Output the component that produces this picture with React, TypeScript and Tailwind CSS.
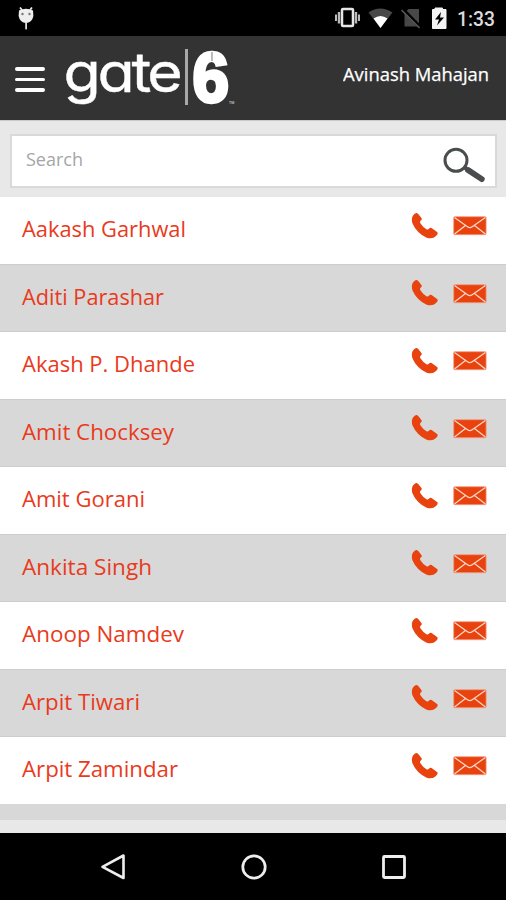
import { useState } from "react";
import clsx from "clsx";

const contacts = [
	{ name: "Aakash Garhwal", width: 164 },
	{ name: "Aditi Parashar", width: 142 },
	{ name: "Akash P. Dhande", width: 173 },
	{ name: "Amit Chocksey", width: 152 },
	{ name: "Amit Gorani", width: 123 },
	{ name: "Ankita Singh", width: 130 },
	{ name: "Anoop Namdev", width: 162 },
	{ name: "Arpit Tiwari", width: 118 },
	{ name: "Arpit Zamindar", width: 156 },
];

const PhoneIcon = () => (
	<svg width="28" height="28" viewBox="0 0 28 28" fill="#e8420f">
		<path d="M2.2 3.2 Q4.2 .8 5.8 1 Q7.2 1.6 10.6 6.2 Q11.4 7.4 9.8 8.6 Q8.6 9.6 9.2 11 Q11.8 15.2 15.8 17.4 Q17 18 17.9 16.8 Q19 15.2 20.6 15.9 L26.4 20.2 Q27.4 21.6 25 24 Q21.4 27.6 15.2 25.4 Q5.6 20.8 1.4 11.2 Q0 6 2.2 3.2Z" />
	</svg>
);

const MailIcon = () => (
	<svg width="34" height="20" viewBox="0 0 34 20">
		<rect x=".7" y=".7" width="32.4" height="18" rx="1" fill="#e8420f" stroke="#f39a7d" strokeWidth=".8" />
		<path
			d="M1.5 1.5 L14.5 10.8 Q16.8 12.6 19.2 10.8 L32.4 1.5 M1.5 18 L12.5 9.5 M32.4 18 L21.5 9.5"
			fill="none"
			stroke="#ffd5c5"
			strokeWidth="1.3"
		/>
	</svg>
);

// Android status bar
const StatusBar = () => (
	<div className="flex h-9 shrink-0 items-start bg-black">
		<svg className="ml-[17px] mt-[6px]" width="18" height="26" viewBox="0 0 18 26">
			<path d="M3 1.5 L5 4 M15 1.5 L13 4" stroke="#eee" strokeWidth="1.8" />
			<path d="M2 4.5 Q9 1 16 4.5 L16.4 10 Q15 16.8 9 17 Q3 16.8 1.6 10Z" fill="#eee" />
			<path d="M8.2 16 H10 V22.5 L9 24 L8.2 22.5Z" fill="#ddd" />
			<circle cx="5.5" cy="8" r="1.2" fill="#777" />
			<circle cx="12.5" cy="8" r="1.2" fill="#777" />
		</svg>
		<svg className="ml-auto mt-[6px]" width="118" height="24" viewBox="0 0 118 24">
			{/* vibrate */}
			<rect x="8" y="3" width="11" height="17" rx="1" fill="none" stroke="#e6e6e6" strokeWidth="2.5" />
			<path d="M5 6 V17.5 M22 6 V17.5" stroke="#bbb" strokeWidth="2.4" />
			<path d="M2 8.5 V15 M25 8.5 V15" stroke="#bbb" strokeWidth="2" />
			{/* wifi */}
			<path d="M34.5 6.5 Q46 -1.5 58.5 6.5 L46.5 22Z" fill="#484848" />
			<path d="M39.5 12.5 Q46.5 7.5 53.5 12.5 L46.5 22Z" fill="#fff" />
			{/* no sim */}
			<path d="M74.5 3 H85 V20.5 H70.5 V7Z" fill="#484848" />
			<path d="M68 2.5 L86.5 21.5" stroke="#000" strokeWidth="3.4" />
			<path d="M67.5 4 L85.5 22" stroke="#5a5a5a" strokeWidth="1.6" />
			{/* battery */}
			<path d="M101 2 V3.5 H98.5 V22.5 H112 V3.5 H108.5 V2Z" fill="#f3f3f3" stroke="#f3f3f3" />
			<path d="M107 6 L101 13.5 H105 L103 19.5 L110 11.5 H106Z" fill="#000" />
		</svg>
		<svg className="ml-[2px] mr-[8px] mt-[6px]" width="44" height="26" viewBox="0 0 44 26">
			<text x="3" y="20" textLength="38" lengthAdjust="spacingAndGlyphs" fill="#dcdcdc" className="font-[Roboto,sans-serif] text-[21px] font-medium">
				1:33
			</text>
		</svg>
	</div>
);

const Logo = () => (
	<svg className="ml-[18px]" width="170" height="64" viewBox="0 0 170 64" fill="#fff" overflow="visible">
		<text
			x="0.5"
			y="45.5"
			textLength="116"
			lengthAdjust="spacingAndGlyphs"
			stroke="#fff"
			strokeWidth=".4"
			className="font-[Inter,sans-serif] text-[55px] tracking-[-3px] [font-feature-settings:'cv11'_1]"
		>
			gate
		</text>
		<rect x="122" y="3" width="3" height="56" fill="#a8a8a8" />
		<text
			x="129.5"
			y="56"
			textLength="36.5"
			lengthAdjust="spacingAndGlyphs"
			stroke="#fff"
			strokeWidth="3.5"
			className="font-['Liberation_Sans',sans-serif] text-[70px] font-bold"
		>
			6
		</text>
		<rect x="148.3" y="6" width="1.3" height="9" fill="#999" />
		<text x="166" y="57.5" fill="#bbb" className="font-[Roboto,sans-serif] text-[3.5px] font-bold">
			TM
		</text>
	</svg>
);

const NavBar = () => (
	<nav className="flex h-[67px] shrink-0 items-center bg-black pl-[99px] pr-[98px]">
		<button aria-label="Back">
			<svg width="28" height="30" viewBox="0 0 28 30">
				<path d="M24.5 3.5 V26 L3.5 14.8Z" fill="none" stroke="#eee" strokeWidth="2.6" strokeLinejoin="round" />
			</svg>
		</button>
		<button aria-label="Home" className="mx-auto">
			<svg width="28" height="28" viewBox="0 0 28 28">
				<circle cx="14" cy="14" r="11.2" fill="none" stroke="#eee" strokeWidth="2.7" />
			</svg>
		</button>
		<button aria-label="Recents">
			<svg width="28" height="28" viewBox="0 0 28 28">
				<rect x="3.5" y="3.5" width="21" height="21" rx="1" fill="none" stroke="#eee" strokeWidth="2.8" />
			</svg>
		</button>
	</nav>
);

export default function App() {
	const [query, setQuery] = useState("");

	const visible = contacts.filter((c) =>
		c.name.toLowerCase().includes(query.toLowerCase()),
	);

	return (
		<div className="flex h-[900px] w-[506px] flex-col overflow-hidden bg-[#e8e8e8] font-['Open_Sans',sans-serif]">
			<StatusBar />

			<header className="flex h-[84px] shrink-0 items-start bg-[#333] pl-[15px] pr-[17px] pt-[10px]">
				<button aria-label="Menu" className="mt-[21px] flex flex-col gap-[7px]">
					<span className="h-[3.5px] w-[30px] rounded-full bg-white" />
					<span className="h-[3.5px] w-[30px] rounded-full bg-white" />
					<span className="h-[3.5px] w-[30px] rounded-full bg-white" />
				</button>
				<Logo />
				<svg className="ml-auto mt-[14px]" width="146" height="30" viewBox="0 0 146 30">
					<text x="0" y="21" textLength="146" lengthAdjust="spacingAndGlyphs" fill="#fff" stroke="#fff" strokeWidth=".25" className="text-[18.5px]">
						Avinash Mahajan
					</text>
				</svg>
			</header>

			{/* Search */}
			<div className="h-[76.5px] shrink-0 border-t border-[#c9c9c9] pl-[10px] pr-[9px] pt-[13px]">
				<div className="flex h-[54px] items-center border-2 border-[#d9d9d9] bg-white pl-[14px] pr-[9px]">
					<input
						value={query}
						onChange={(e) => setQuery(e.target.value)}
						placeholder="Search"
						className="min-w-0 flex-1 pb-[3px] text-[18px] text-gray-700 outline-none placeholder:text-[#a6a6a6]"
					/>
					<svg width="44" height="40" viewBox="0 0 44 40" fill="none" stroke="#4a4d4d" overflow="visible">
						<circle cx="14" cy="19.3" r="11" strokeWidth="3" />
						<path d="M22 26 L27 29.5" strokeWidth="4.2" />
						<path d="M26 29 L39.8 38.2" strokeWidth="5.8" strokeLinecap="round" />
					</svg>
				</div>
			</div>

			{/* Contact list */}
			<ul className="h-[623.5px] shrink-0 overflow-hidden bg-[#d8d8d8]">
				{visible.map((contact, i) => (
					<li
						key={contact.name}
						className={clsx(
							"flex h-[67.5px] items-start pl-[22px] pr-[19px]",
							i % 2 === 0 ? "bg-white" : "bg-[#d8d8d8] shadow-[inset_0_1px_#cdcdcd,inset_0_-1px_#cdcdcd]",
						)}
					>
						<svg className="mt-[16px]" width={contact.width} height="34" overflow="visible">
							<text x="0" y={i % 2 === 0 ? 24 : 24.5} textLength={contact.width} lengthAdjust="spacingAndGlyphs" fill="#e93a1c" className="text-[22px]">
								{contact.name}
							</text>
						</svg>
						<button aria-label="Call" className="ml-auto mt-[15px]">
							<PhoneIcon />
						</button>
						<button aria-label="Email" className="ml-[14px] mt-[19.5px]">
							<MailIcon />
						</button>
					</li>
				))}
			</ul>
			<div className="h-[13px] shrink-0" />

			<NavBar />
		</div>
	);
}
